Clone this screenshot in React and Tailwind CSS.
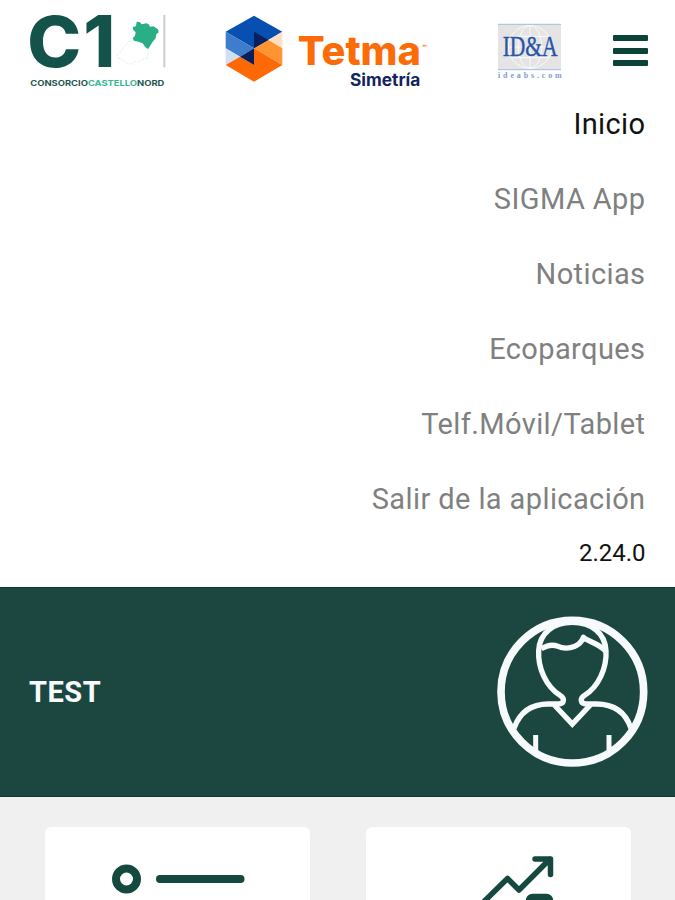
import React, { useState } from "react";

const menuItems = [
  "Inicio",
  "SIGMA App",
  "Noticias",
  "Ecoparques",
  "Telf.Móvil/Tablet",
  "Salir de la aplicación",
];

const ConsorcioLogo = () => (
  <svg className="overflow-visible" width="155" height="90" viewBox="0 0 465 270" fontFamily="Inter, sans-serif">
    <g fill="#14534a" fontWeight="800">
      <text x="22" y="185" fontSize="209" textLength="162" lengthAdjust="spacingAndGlyphs">C</text>
      <text x="190" y="187" fontSize="215" textLength="96" lengthAdjust="spacingAndGlyphs">1</text>
    </g>
    <path d="M338 66L348 64L350 50L359 51L365 58L379 55L386 58L390 65L400 64L414 73L416 82L409 88L407 100L397 112L384 133L376 127L368 115L355 110L342 107L338 100L345 92L347 82L340 75Z" fill="#2aae86" />
    <path d="M342 107l-17 2-5 9-10 9-6 13-12 9 2 11 13 3 9 8 9 5 13 1 8-8 12 2 8-8 16-3 4-16-5-16-13-7-8-9-12-2z" fill="none" stroke="#b9ddd1" strokeWidth="2" strokeDasharray="3 4" />
    <path d="M433 30V187" stroke="#c9cecc" strokeWidth="6" />
    <text x="31" y="244" fontSize="22" fontWeight="700" textLength="402" lengthAdjust="spacingAndGlyphs" fill="#26564f">
      CONSORCIO<tspan fill="#36b893">CASTELLO</tspan>NORD
    </text>
  </svg>
);

const TetmaLogo = () => (
  <svg width="220" height="90" viewBox="0 0 660 270" fontFamily="Inter, sans-serif">
    <path d="M117 32l85 48-42 25-43 25-85-50z" fill="#0750b2" />
    <path d="M32 80l85 50-42 25-43-25z" fill="#3d7dcb" />
    <path d="M32 130l43 25-43 25z" fill="#cfdff4" />
    <path d="M202 80v50l-42-25z" fill="#ffdfc2" />
    <path d="M160 105l42 25v50l-85-50z" fill="#ff9433" />
    <path d="M32 180l43-25 42 25v-50l85 50-85 50z" fill="#fd6905" />
    <path d="M117 80l43 25-43 25v50l-42-25 42-25z" fill="#09205c" />
    <text x="248" y="181" fontSize="119" fontWeight="800" textLength="370" lengthAdjust="spacingAndGlyphs" fill="#fb6b08">Tetma</text>
    <path d="M622 122h13" stroke="#fb9b57" strokeWidth="5" />
    <text x="405" y="243" fontSize="51" fontWeight="700" textLength="211" lengthAdjust="spacingAndGlyphs" fill="#14245e">Simetría</text>
  </svg>
);

const IdeaLogo = () => (
  <svg className="overflow-visible" width="80" height="70" viewBox="0 0 240 210" fontFamily="Liberation Serif, serif">
    <rect x="24" y="30" width="189" height="132" fill="#e4e4e5" />
    <g fill="none" stroke="#fafafa" strokeWidth="3">
      <ellipse cx="120" cy="96" rx="65" ry="64" />
      <ellipse cx="120" cy="96" rx="35" ry="64" />
      <path d="M120 32v128M55 96h130M66 64h108M66 128h108" />
    </g>
    <path d="M24 28h189M24 164h189" stroke="#a8b7dc" strokeWidth="3" />
    <text x="38" y="124" fontSize="86" textLength="165" fill="#2954a8" lengthAdjust="spacingAndGlyphs" stroke="#2954a8" strokeWidth="1">{"ID&A"}</text>
    <text x="24" y="189" fontSize="24" fontWeight="700" textLength="191" fill="#829bcd">ideabs.com</text>
  </svg>
);

const UserAvatar = () => (
  <svg width="175" height="175" viewBox="0 0 525 525" fill="none" stroke="#f7fafa" strokeWidth="16" strokeLinejoin="round">
    <circle cx="262" cy="260" r="214" strokeWidth="23" />
    <path d="M208 300l54 57 54-57" strokeLinejoin="miter" />
    <path d="M87 370C105 319 140 297 190 297H219C239 297 240 280 225 271C184 245 158 190 161 137C164 84 205 52 262 52S360 84 363 137C366 190 340 245 299 271C284 280 285 297 305 297H334C384 297 421 319 438 370" />
    <path d="M169 131C202 114 211 122 228 127C254 134 286 123 295 97C312 112 339 113 361 138" />
    <path d="M152 390v55M372 390v55" strokeWidth="15" />
  </svg>
);

const App = () => {
  const [menuOpen, setMenuOpen] = useState(true);

  return (
    <div className="h-[900px] w-[675px] overflow-hidden bg-white font-[Roboto,sans-serif]">
      <header className="flex h-[95px] items-start pl-5">
        <div className="mt-[5px]"><ConsorcioLogo /></div>
        <div className="mt-[5px] ml-10"><TetmaLogo /></div>
        <div className="mt-[15px] ml-[55px]"><IdeaLogo /></div>
        <button
          className="mt-[35px] ml-[43px] flex w-[35px] cursor-pointer flex-col gap-[6.5px]"
          aria-label="Menu"
          onClick={() => setMenuOpen(!menuOpen)}
        >
          <span className="h-1.5 w-full rounded-[1px] bg-[#0b4339]"></span>
          <span className="h-1.5 w-full rounded-[1px] bg-[#0b4339]"></span>
          <span className="h-1.5 w-full rounded-[1px] bg-[#0b4339]"></span>
        </button>
      </header>

      {menuOpen && (
        <nav className="-mt-2 h-[500px] pr-[29.5px] text-right">
          <ul>
            {menuItems.map((item, index) => (
              <li
                key={item}
                className={`h-[75px] text-[29px] leading-[75px] tracking-[0.4px] ${index === 0 ? "text-[#111111]" : "text-[#808080]"}`}
              >
                <a href="#">{item}</a>
              </li>
            ))}
          </ul>
          <p className="text-2xl leading-[33px] text-[#111111]">2.24.0</p>
        </nav>
      )}

      <section className="flex h-[210px] items-center justify-between border-y border-[#0b3a31] bg-[#1c4741] pr-[15px] pl-[29px]">
        <h1 className="pt-0.5 text-[29px] font-bold tracking-[0.5px] text-[#f7fafa]">TEST</h1>
        <UserAvatar />
      </section>

      <main className="flex h-[103px] gap-14 bg-[#f0f0f0] pt-[30px] pl-[45px]">
        <div className="w-[265px] rounded-t-[6px] bg-white">
          <svg width="265" height="73" viewBox="0 0 265 73">
            <circle cx="81.5" cy="52" r="10.5" fill="none" stroke="#15483f" strokeWidth="8" />
            <path d="M115 52h80.500" stroke="#15483f" strokeWidth="8" strokeLinecap="round" />
          </svg>
        </div>
        <div className="w-[265px] rounded-t-[6px] bg-white">
          <svg width="265" height="73" viewBox="0 0 265 73" fill="none" stroke="#15483f" strokeWidth="5.5" strokeLinecap="round" strokeLinejoin="round">
            <path d="M115 77.500L141.500 51.500L153 63L184 32M169 32H184.500V47.500" />
            <rect x="162.500" y="69.500" width="22" height="20" rx="4" fill="#15483f" />
          </svg>
        </div>
      </main>
    </div>
  );
};

export default App;
